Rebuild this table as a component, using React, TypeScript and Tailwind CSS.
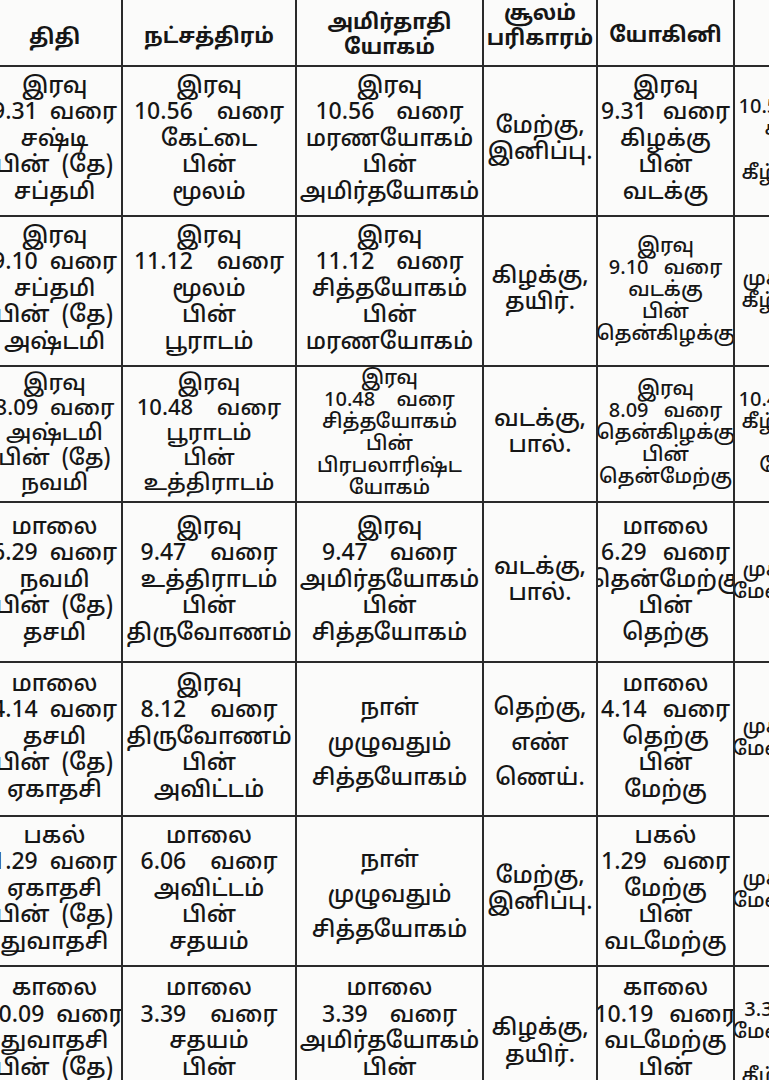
import React from "react";

type Cell = { lines: string[]; size?: "sm" | "md"; spread?: boolean };

const cols = "grid-cols-[133px_172px_185px_112px_135px_130px]";

// word gap differs per column, as in the printed page
const gaps = [
    "[word-spacing:6px]",
    "[word-spacing:18px]",
    "[word-spacing:16px]",
    "[word-spacing:4px]",
    "[word-spacing:10px]",
    "[word-spacing:8px]",
];

// header text and top padding per column
const header: { lines: string[]; pad: string }[] = [
    { lines: ["திதி"], pad: "pt-[35px]" },
    { lines: ["நட்சத்திரம்"], pad: "pt-[34px]" },
    { lines: ["அமிர்தாதி", "யோகம்"], pad: "pt-[20px]" },
    { lines: ["சூலம்", "பரிகாரம்"], pad: "pt-[11px]" },
    { lines: ["யோகினி"], pad: "pt-[33px]" },
    { lines: [""], pad: "" },
];

const rows: { h: string; cells: Cell[] }[] = [
    {
        h: "h-[148px]",
        cells: [
            { lines: ["இரவு", "9.31 வரை", "சஷ்டி", "பின் (தே)", "சப்தமி"] },
            { lines: ["இரவு", "10.56 வரை", "கேட்டை", "பின்", "மூலம்"] },
            { lines: ["இரவு", "10.56 வரை", "மரணயோகம்", "பின்", "அமிர்தயோகம்"] },
            { lines: ["மேற்கு,", "இனிப்பு."] },
            { lines: ["இரவு", "9.31 வரை", "கிழக்கு", "பின்", "வடக்கு"] },
            { lines: ["10.56 வரை", "சப்தமி", "நல்ல", "கீழ்நோக்கு"], size: "sm" },
        ],
    },
    {
        h: "h-[148px]",
        cells: [
            { lines: ["இரவு", "9.10 வரை", "சப்தமி", "பின் (தே)", "அஷ்டமி"] },
            { lines: ["இரவு", "11.12 வரை", "மூலம்", "பின்", "பூராடம்"] },
            { lines: ["இரவு", "11.12 வரை", "சித்தயோகம்", "பின்", "மரணயோகம்"] },
            { lines: ["கிழக்கு,", "தயிர்."] },
            { lines: ["இரவு", "9.10 வரை", "வடக்கு", "பின்", "தென்கிழக்கு"], size: "sm" },
            { lines: ["முகூர்த்தம்", "கீழ்நோக்கு"], size: "sm" },
        ],
    },
    {
        h: "h-[134px]",
        cells: [
            { lines: ["இரவு", "8.09 வரை", "அஷ்டமி", "பின் (தே)", "நவமி"], size: "md" },
            { lines: ["இரவு", "10.48 வரை", "பூராடம்", "பின்", "உத்திராடம்"], size: "md" },
            { lines: ["இரவு", "10.48 வரை", "சித்தயோகம்", "பின்", "பிரபலாரிஷ்ட", "யோகம்"], size: "sm" },
            { lines: ["வடக்கு,", "பால்."] },
            { lines: ["இரவு", "8.09 வரை", "தென்கிழக்கு", "பின்", "தென்மேற்கு"], size: "sm" },
            { lines: ["10.48 வரை", "கீழ்நோக்கு", "நல்ல", "யோகம்"], size: "sm" },
        ],
    },
    {
        h: "h-[158px]",
        cells: [
            { lines: ["மாலை", "6.29 வரை", "நவமி", "பின் (தே)", "தசமி"] },
            { lines: ["இரவு", "9.47 வரை", "உத்திராடம்", "பின்", "திருவோணம்"] },
            { lines: ["இரவு", "9.47 வரை", "அமிர்தயோகம்", "பின்", "சித்தயோகம்"] },
            { lines: ["வடக்கு,", "பால்."] },
            { lines: ["மாலை", "6.29 வரை", "தென்மேற்கு", "பின்", "தெற்கு"] },
            { lines: ["முகூர்த்தம்", "மேல்நோக்கு"], size: "sm" },
        ],
    },
    {
        h: "h-[152px]",
        cells: [
            { lines: ["மாலை", "4.14 வரை", "தசமி", "பின் (தே)", "ஏகாதசி"] },
            { lines: ["இரவு", "8.12 வரை", "திருவோணம்", "பின்", "அவிட்டம்"] },
            { lines: ["நாள்", "முழுவதும்", "சித்தயோகம்"], spread: true },
            { lines: ["தெற்கு,", "எண்", "ணெய்."], spread: true },
            { lines: ["மாலை", "4.14 வரை", "தெற்கு", "பின்", "மேற்கு"] },
            { lines: ["முகூர்த்தம்", "மேல்நோக்கு"], size: "sm" },
        ],
    },
    {
        h: "h-[148px]",
        cells: [
            { lines: ["பகல்", "1.29 வரை", "ஏகாதசி", "பின் (தே)", "துவாதசி"] },
            { lines: ["மாலை", "6.06 வரை", "அவிட்டம்", "பின்", "சதயம்"] },
            { lines: ["நாள்", "முழுவதும்", "சித்தயோகம்"], spread: true },
            { lines: ["மேற்கு,", "இனிப்பு."] },
            { lines: ["பகல்", "1.29 வரை", "மேற்கு", "பின்", "வடமேற்கு"] },
            { lines: ["முகூர்த்தம்", "மேல்நோக்கு"], size: "sm" },
        ],
    },
    {
        h: "h-[153px]",
        cells: [
            { lines: ["காலை", "10.09 வரை", "துவாதசி", "பின் (தே)", "திரயோதசி"] },
            { lines: ["மாலை", "3.39 வரை", "சதயம்", "பின்", "பூரட்டாதி"] },
            { lines: ["மாலை", "3.39 வரை", "அமிர்தயோகம்", "பின்", "சித்தயோகம்"] },
            { lines: ["கிழக்கு,", "தயிர்."] },
            { lines: ["காலை", "10.19 வரை", "வடமேற்கு", "பின்", "வடக்கு"] },
            { lines: ["3.39 வரை", "மேல்நோக்கு", "நல்ல", "கீழ்நோக்கு"], size: "sm" },
        ],
    },
];

function CellBox({ cell, gap }: { cell: Cell; gap: string }) {
    const lead =
        cell.size === "sm"
            ? "text-[20px] leading-[22px]"
            : cell.size === "md"
            ? "text-[22px] leading-[25px]"
            : cell.spread
            ? "text-[23px] leading-[35px] pt-[10px]"
            : "text-[23px] leading-[26.5px]";
    return (
        <div className={`flex flex-col items-center justify-center overflow-hidden bg-[#fbfbfa] text-center font-medium ${lead} ${gap}`}>
            {cell.lines.map((l, i) => (
                <div key={i} className="whitespace-nowrap">
                    {l}
                </div>
            ))}
        </div>
    );
}

export default function App() {
    return (
        <div
            className="h-[1080px] w-[769px] overflow-hidden bg-[#fbfbfa] text-[#161616]"
            style={{ fontFamily: '"Noto Sans Tamil", "Lohit Tamil", "Noto Sans", sans-serif' }}
        >
            <div className="-ml-[12px] -mt-[8px] flex w-[901px] flex-col gap-[2px] bg-[#2a2a2a]">
                <div className={`grid ${cols} h-[73px] gap-[2px]`}>
                    {header.map((h, i) => (
                        <div
                            key={i}
                            className={`flex flex-col items-center justify-start overflow-hidden bg-[#fbfbfa] text-center text-[21px] font-bold leading-[25px] ${h.pad}`}
                        >
                            {h.lines.map((l, j) => (
                                <div key={j} className="whitespace-nowrap">
                                    {l}
                                </div>
                            ))}
                        </div>
                    ))}
                </div>
                {rows.map((r, i) => (
                    <div key={i} className={`grid ${cols} ${r.h} gap-[2px]`}>
                        {r.cells.map((c, j) => (
                            <CellBox key={j} cell={c} gap={gaps[j]} />
                        ))}
                    </div>
                ))}
            </div>
        </div>
    );
}
